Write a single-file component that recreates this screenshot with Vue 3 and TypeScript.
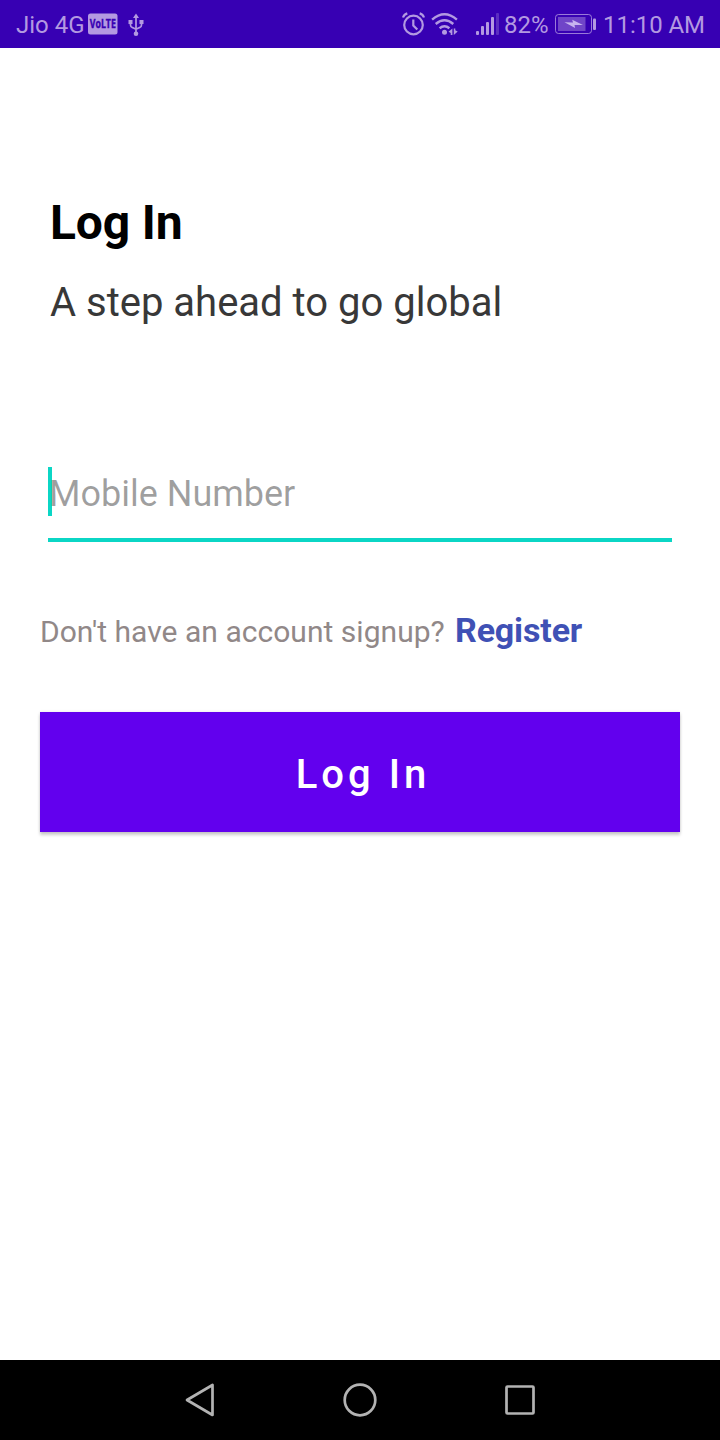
<script setup lang="ts">
import { ref } from 'vue'

const mobile = ref<string>('')
const carrier = 'Jio 4G'
const battery = '82%'
const clock = '11:10 AM'
</script>

<template>
  <div class="screen">
    <header class="status">
      <span class="carrier">{{ carrier }}</span>
      <svg class="volte" width="30" height="22" viewBox="0 0 30 22">
        <rect x="0" y="0.5" width="29.5" height="21" rx="2.5" fill="#b399e1" />
        <text x="14.8" y="15" text-anchor="middle" textLength="26" lengthAdjust="spacingAndGlyphs">VoLTE</text>
      </svg>
      <svg class="usb" width="16" height="24" viewBox="0 0 16 24" fill="none" stroke="#b399e1" stroke-width="1.7">
        <path d="M8 3v18M2.500 9v4q0 2 2 2.600L8 17.300M13.500 9v4q0 2-2 2.600L8 17.300" />
        <path d="M8 1.500l3 4.500H5z" fill="#b399e1" stroke="none" />
        <circle cx="8" cy="21.800" r="2.300" fill="#b399e1" stroke="none" />
        <path d="M0.500 8h4v4h-4zM11.500 8h4v4h-4z" fill="#b399e1" stroke="none" />
      </svg>

      <svg class="alarm" width="24" height="24" viewBox="0 0 24 24" fill="none" stroke="#b399e1" stroke-width="2.200">
        <circle cx="11.500" cy="13" r="9.300" />
        <path d="M11.300 7.500v6l4 4" />
        <path d="M1 5.500q1-3 4.300-4.100M22 5.500q-1-3-4.300-4.100" />
      </svg>
      <svg class="wifi" width="28" height="24" viewBox="0 0 28 24" fill="none" stroke="#b399e1" stroke-width="2.400">
        <path d="M1.100 7.600q12.400-10.600 24.800 0M4.700 12q8.800-7.400 17.600 0M8.600 16.200q4.900-4 9.800 0" />
        <circle cx="13.500" cy="20.300" r="2.500" fill="#b399e1" stroke="none" />
        <path d="M21.400 16.500v6.500h-1.700v-2l-2.200-1.300zM22.800 23v-6.500h1.500v1.800l2.400 1.300z" fill="#b399e1" stroke="none" />
      </svg>
      <svg class="signal" width="24" height="24" viewBox="0 0 24 24" fill="#b399e1">
        <rect x="0" y="19" width="3" height="4" rx="1" />
        <rect x="5" y="14" width="3" height="9" rx="1" />
        <rect x="10" y="10" width="3" height="13" rx="1" />
        <rect x="15" y="5" width="3" height="18" rx="1" />
        <rect x="20" y="1" width="3" height="22" rx="1" opacity="0.3" />
      </svg>
      <span class="percent">{{ battery }}</span>
      <svg class="battery" width="42" height="22" viewBox="0 0 42 22">
        <rect x="0.500" y="1.500" width="36" height="19" rx="3" fill="none" stroke="#b399e1" stroke-width="1" opacity="0.8" />
        <rect x="3" y="4" width="27.500" height="14" fill="#7045c8" />
        <path d="M9.500 9.300l8.500.2-.8-2.700L28 12h-8.500l.6 3z" fill="#c8b5ef" />
        <rect x="38" y="5.500" width="3" height="11.500" rx="1" fill="#b399e1" />
      </svg>
      <span class="clock">{{ clock }}</span>
    </header>

    <main class="content">
      <h1>Log In</h1>
      <p class="subtitle">A step ahead to go global</p>
      <div class="field">
        <span class="caret"></span>
        <input v-model="mobile" type="tel" placeholder="Mobile Number" />
      </div>
      <p class="signup"><span class="question">Don't have an account signup?</span><a class="register">Register</a></p>
      <button type="button" class="login">Log In</button>
    </main>

    <nav class="navbar">
      <svg width="32" height="40" viewBox="0 0 32 40"><path d="M28.500 5v30L3 20z" /></svg>
      <svg width="40" height="40" viewBox="0 0 40 40"><circle cx="20" cy="20" r="15.300" /></svg>
      <svg width="32" height="40" viewBox="0 0 32 40"><rect x="2.500" y="6.500" width="27" height="27" rx="1" /></svg>
    </nav>
  </div>
</template>

<style>
body {
  margin: 0;
}
</style>

<style scoped>
.screen {
  width: 720px;
  height: 1440px;
  display: flex;
  flex-direction: column;
  background: #fff;
  font-family: Roboto, sans-serif;
  overflow: hidden;
}
.status {
  height: 48px;
  box-sizing: border-box;
  padding: 0 16px;
  display: flex;
  align-items: center;
  flex: none;
  background: #3700b3;
  color: #b399e1;
  font-size: 24px;
  line-height: 48px;
  white-space: nowrap;
}
.status svg {
  flex: none;
  overflow: visible;
}
.carrier {
  width: 72px;
  flex: none;
  padding-top: 1px;
}
.percent,
.clock {
  padding-top: 1px;
}
.volte text {
  font: bold 12px "Open Sans", sans-serif;
  fill: #3700b3;
  stroke: #3700b3;
  stroke-width: 0.4px;
}
.usb {
  margin-left: 10px;
}
.alarm {
  margin-left: auto;
}
.wifi {
  margin-left: 5px;
}
.signal {
  margin-left: 17px;
}
.percent {
  width: 51px;
  margin-left: 4px;
}
.clock {
  margin-left: 6px;
  margin-right: -1px;
  letter-spacing: -0.05px;
}
.content {
  flex: 1;
  padding: 147px 40px 0;
}
h1 {
  margin: 0 0 0 10px;
  font-size: 48px;
  line-height: 56px;
  font-weight: 700;
  letter-spacing: -0.15px;
  color: #000;
}
.subtitle {
  margin: 28px 0 0 10px;
  font-size: 40px;
  line-height: 48px;
  color: #383838;
}
.field {
  position: relative;
  height: 75px;
  margin: 140px 8px 0;
  box-sizing: border-box;
  border-bottom: 4px solid #0bd6c5;
}
.caret {
  position: absolute;
  left: 0;
  top: 0;
  width: 4px;
  height: 49px;
  background: #0bd6c5;
}
input {
  position: relative;
  display: block;
  box-sizing: border-box;
  width: 100%;
  height: 51px;
  padding: 3px 0 0 1px;
  border: 0;
  outline: 0;
  background: transparent;
  font: 36px/48px Roboto, sans-serif;
}
input::placeholder {
  color: rgba(0, 0, 0, 0.38);
  opacity: 1;
}
.signup {
  display: flex;
  align-items: baseline;
  margin: 67px 0 0;
  height: 42px;
  line-height: 42px;
  white-space: nowrap;
}
.question {
  width: 415px;
  font-size: 30px;
  letter-spacing: 0.03px;
  color: #918888;
}
.register {
  font-size: 34px;
  font-weight: 700;
  letter-spacing: -0.15px;
  color: #3f51b5;
}
.login {
  display: block;
  width: 640px;
  height: 120px;
  margin: 61px 0 0;
  padding: 6px 0 0 6px;
  border: 0;
  background: #6200ee;
  color: #fff;
  font: 500 40px/48px Roboto, sans-serif;
  letter-spacing: 4px;
  box-shadow: 0 3px 3px rgba(0, 0, 0, 0.2), 0 0 3px rgba(0, 0, 0, 0.1);
}
.navbar {
  height: 80px;
  flex: none;
  display: flex;
  align-items: center;
  justify-content: center;
  gap: 124px;
  background: #000;
}
.navbar svg {
  fill: none;
  stroke: #b3b3b3;
  stroke-width: 2.7;
  stroke-linejoin: round;
}
</style>
